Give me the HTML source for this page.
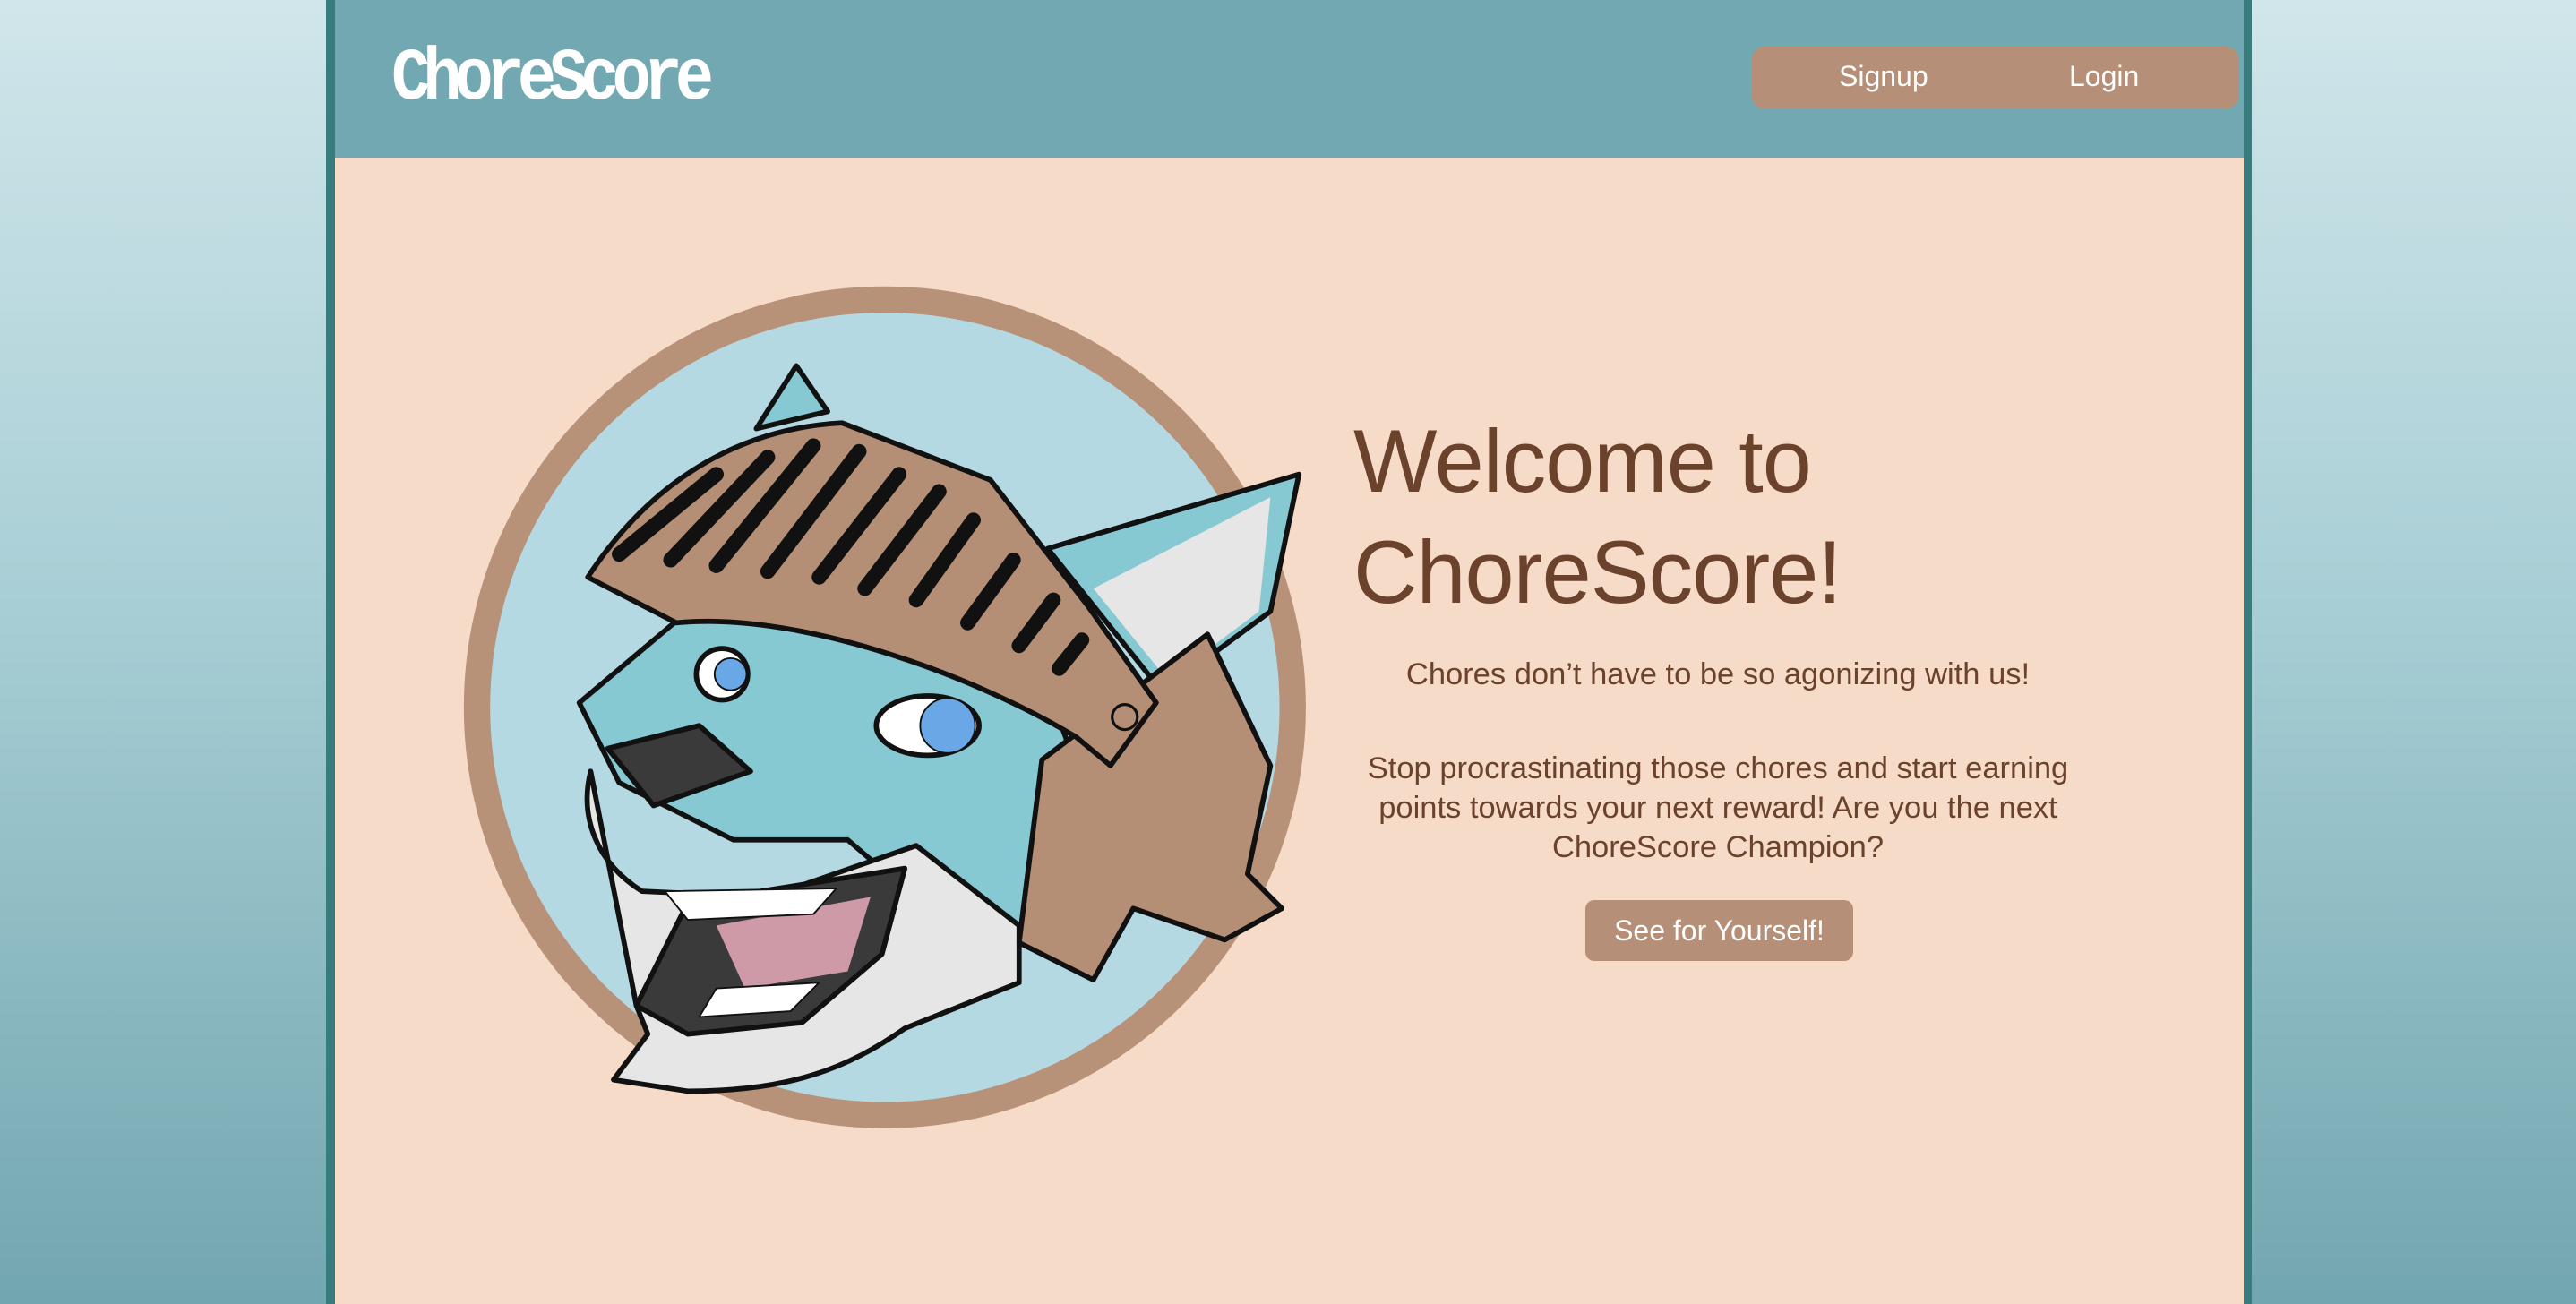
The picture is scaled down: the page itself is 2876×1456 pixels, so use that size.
<!DOCTYPE html>
<html><head><meta charset="utf-8"><style>
html,body{margin:0;padding:0}
body{width:2876px;height:1456px;overflow:hidden;background:linear-gradient(#d0e6ea,#a9cfd6 45%,#72a6b0);position:relative;font-family:"Liberation Sans",sans-serif}
.wrap{position:absolute;left:364px;top:0;width:2131px;height:1456px;border-left:10px solid #377d7e;border-right:9px solid #377d7e;background:#f6dbc8}
.hdr{position:absolute;left:0;top:0;width:100%;height:176px;background:#72a8b1}
.logo{position:absolute;left:63px;top:42px;font-family:"Liberation Mono",monospace;font-weight:bold;font-size:72px;letter-spacing:-8px;color:#fff;line-height:80px;transform:scaleY(1.15);transform-origin:top left}
.nav{position:absolute;left:1582px;top:52px;width:543px;height:70px;background:#b58f77;border-radius:14px;color:#fff;font-size:32px}
.nav span{position:absolute;top:15px}
h1{position:absolute;left:1137px;top:453px;margin:0;font-weight:normal;font-size:99px;line-height:124px;color:#6b422c;letter-spacing:-1px}
.t{position:absolute;left:969px;width:1150px;text-align:center;color:#6b422c;font-size:34.5px;line-height:44px}
.btn{position:absolute;left:1396px;top:1005px;width:299px;height:68px;background:#b58f77;border-radius:10px;color:#fff;font-size:32px;text-align:center;line-height:68px}
svg{position:absolute}
</style></head><body>
<div class="wrap">
<div class="hdr"><div class="logo">ChoreScore</div>
<div class="nav"><span style="left:97px">Signup</span><span style="left:354px">Login</span></div></div>
<h1>Welcome to<br>ChoreScore!</h1>
<div class="t" style="top:731px">Chores don’t have to be so agonizing with us!</div>
<div class="t" style="top:836px">Stop procrastinating those chores and start earning<br>points towards your next reward! Are you the next<br>ChoreScore Champion?</div>
<div class="btn">See for Yourself!</div>
</div>
<svg style="left:500px;top:300px" width="1000" height="1000" viewBox="0 0 1568 1568">
<circle cx="765" cy="768" r="737" fill="#b79178"/>
<circle cx="765" cy="768" r="691" fill="#b5d9e3"/>
<g stroke="#111" stroke-width="9" stroke-linejoin="round">
<path d="M540,280 L610,170 L665,250 Z" fill="#86c9d3"/>
<path d="M1050,490 L1490,360 L1440,600 L1250,740 Z" fill="#86c9d3"/>
<path d="M1130,560 L1440,400 L1420,600 L1260,720 Z" fill="#e6e6e6" stroke-width="0"/>
<path d="M230,760 L420,600 L700,620 L1060,760 L1110,900 L1010,1180 L840,1120 L700,1000 L500,1000 L300,900 Z" fill="#86c9d3"/>
<path d="M250,880 C230,960 260,1040 340,1090 L560,1100 L820,1010 L1000,1150 L1000,1250 L800,1330 C700,1400 600,1440 420,1440 L290,1420 L350,1340 L330,1290 Z" fill="#e6e6e6"/>
<path d="M330,1290 L420,1110 L800,1050 L760,1200 L620,1320 L420,1340 Z" fill="#3a3a3a"/>
<path d="M470,1150 L740,1100 L700,1230 L520,1260 Z" fill="#cf9aa8" stroke-width="0"/>
<path d="M470,1260 L650,1250 L600,1300 L440,1310 Z" fill="#fff" stroke-width="3"/>
<path d="M380,1090 L680,1085 L640,1130 L420,1140 Z" fill="#fff" stroke-width="3"/>
<path d="M280,840 L440,800 L530,880 L360,940 Z" fill="#3a3a3a"/>
<ellipse cx="480" cy="710" rx="45" ry="45" fill="#fff"/>
<circle cx="495" cy="710" r="28" fill="#6aa7e6" stroke-width="3"/>
<ellipse cx="840" cy="800" rx="90" ry="52" fill="#fff"/>
<circle cx="875" cy="800" r="48" fill="#6aa7e6" stroke-width="3"/>
<path d="M1040,860 L1330,640 L1440,870 L1400,1060 L1460,1120 L1360,1175 L1200,1120 L1130,1245 L1000,1180 Z" fill="#b58e76"/>
<path d="M245,540 C350,380 500,280 690,270 L950,370 L1120,590 L1240,760 L1160,870 L1100,820 C900,700 600,600 400,620 Z" fill="#b58e76"/>
<circle cx="1185" cy="785" r="22" fill="#b58e76" stroke-width="5"/>
</g>
<g stroke="#111" stroke-width="26" stroke-linecap="round">
<line x1="300" y1="500" x2="470" y2="360"/><line x1="390" y1="510" x2="560" y2="330"/>
<line x1="470" y1="520" x2="640" y2="310"/><line x1="560" y1="530" x2="720" y2="320"/>
<line x1="650" y1="540" x2="790" y2="360"/><line x1="730" y1="560" x2="860" y2="390"/>
<line x1="820" y1="580" x2="920" y2="440"/><line x1="910" y1="620" x2="990" y2="510"/>
<line x1="1000" y1="660" x2="1060" y2="580"/><line x1="1070" y1="700" x2="1110" y2="650"/>
</g>
</svg>
</body></html>
